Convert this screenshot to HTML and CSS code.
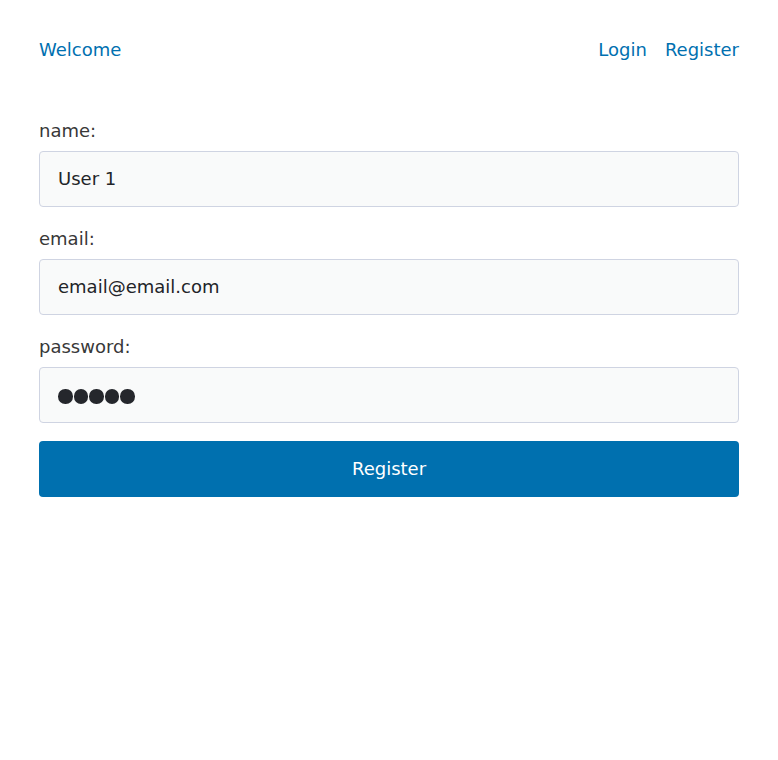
FILE: index.html
```html
<!DOCTYPE html>
<html>
<head>
<meta charset="utf-8">
<link rel="stylesheet" href="styles.css">
</head>
<body>
<div class="page">
  <header class="topbar">
    <a class="link" href="#">Welcome</a>
    <nav class="nav">
      <a class="link" href="#">Login</a>
      <a class="link" href="#">Register</a>
    </nav>
  </header>
  <form class="form">
    <div class="field">
      <label class="label">name:</label>
      <div class="input">User 1</div>
    </div>
    <div class="field">
      <label class="label">email:</label>
      <div class="input">email@email.com</div>
    </div>
    <div class="field">
      <label class="label">password:</label>
      <div class="input dots"><span class="dot"></span><span class="dot"></span><span class="dot"></span><span class="dot"></span><span class="dot"></span></div>
    </div>
    <button class="btn" type="button">Register</button>
  </form>
</div>
</body>
</html>
```
FILE: styles.css
```css
html, body {
  margin: 0;
  padding: 0;
  background: #ffffff;
}
body {
  font-family: "DejaVu Sans", sans-serif;
  font-size: 18px;
  line-height: 21px;
  color: #333333;
}
.page {
  padding: 39px;
}
.topbar {
  display: flex;
  justify-content: space-between;
  align-items: center;
}
.nav {
  display: flex;
  gap: 18px;
}
.link {
  color: #0070b0;
  text-decoration: none;
}
.form {
  margin-top: 60px;
  display: flex;
  flex-direction: column;
}
.field {
  display: flex;
  flex-direction: column;
  gap: 10px;
  margin-bottom: 21px;
}
.field:last-of-type {
  margin-bottom: 18px;
}
.label {
  color: #383838;
}
.input {
  box-sizing: border-box;
  height: 56px;
  border: 1px solid #cfd4e2;
  border-radius: 4px;
  background: #f9fafa;
  padding: 0 18px 2px;
  display: flex;
  align-items: center;
  color: #222428;
}
.dots {
  gap: 1px;
  padding-bottom: 0;
  padding-top: 3px;
}
.dot {
  width: 14.5px;
  height: 14.5px;
  border-radius: 50%;
  background: #25272c;
}
.btn {
  box-sizing: border-box;
  height: 56px;
  border: none;
  border-radius: 4px;
  background: #0070af;
  color: #ffffff;
  font-family: "DejaVu Sans", sans-serif;
  font-size: 18px;
  padding: 0 0 2px;
  cursor: pointer;
}
```
